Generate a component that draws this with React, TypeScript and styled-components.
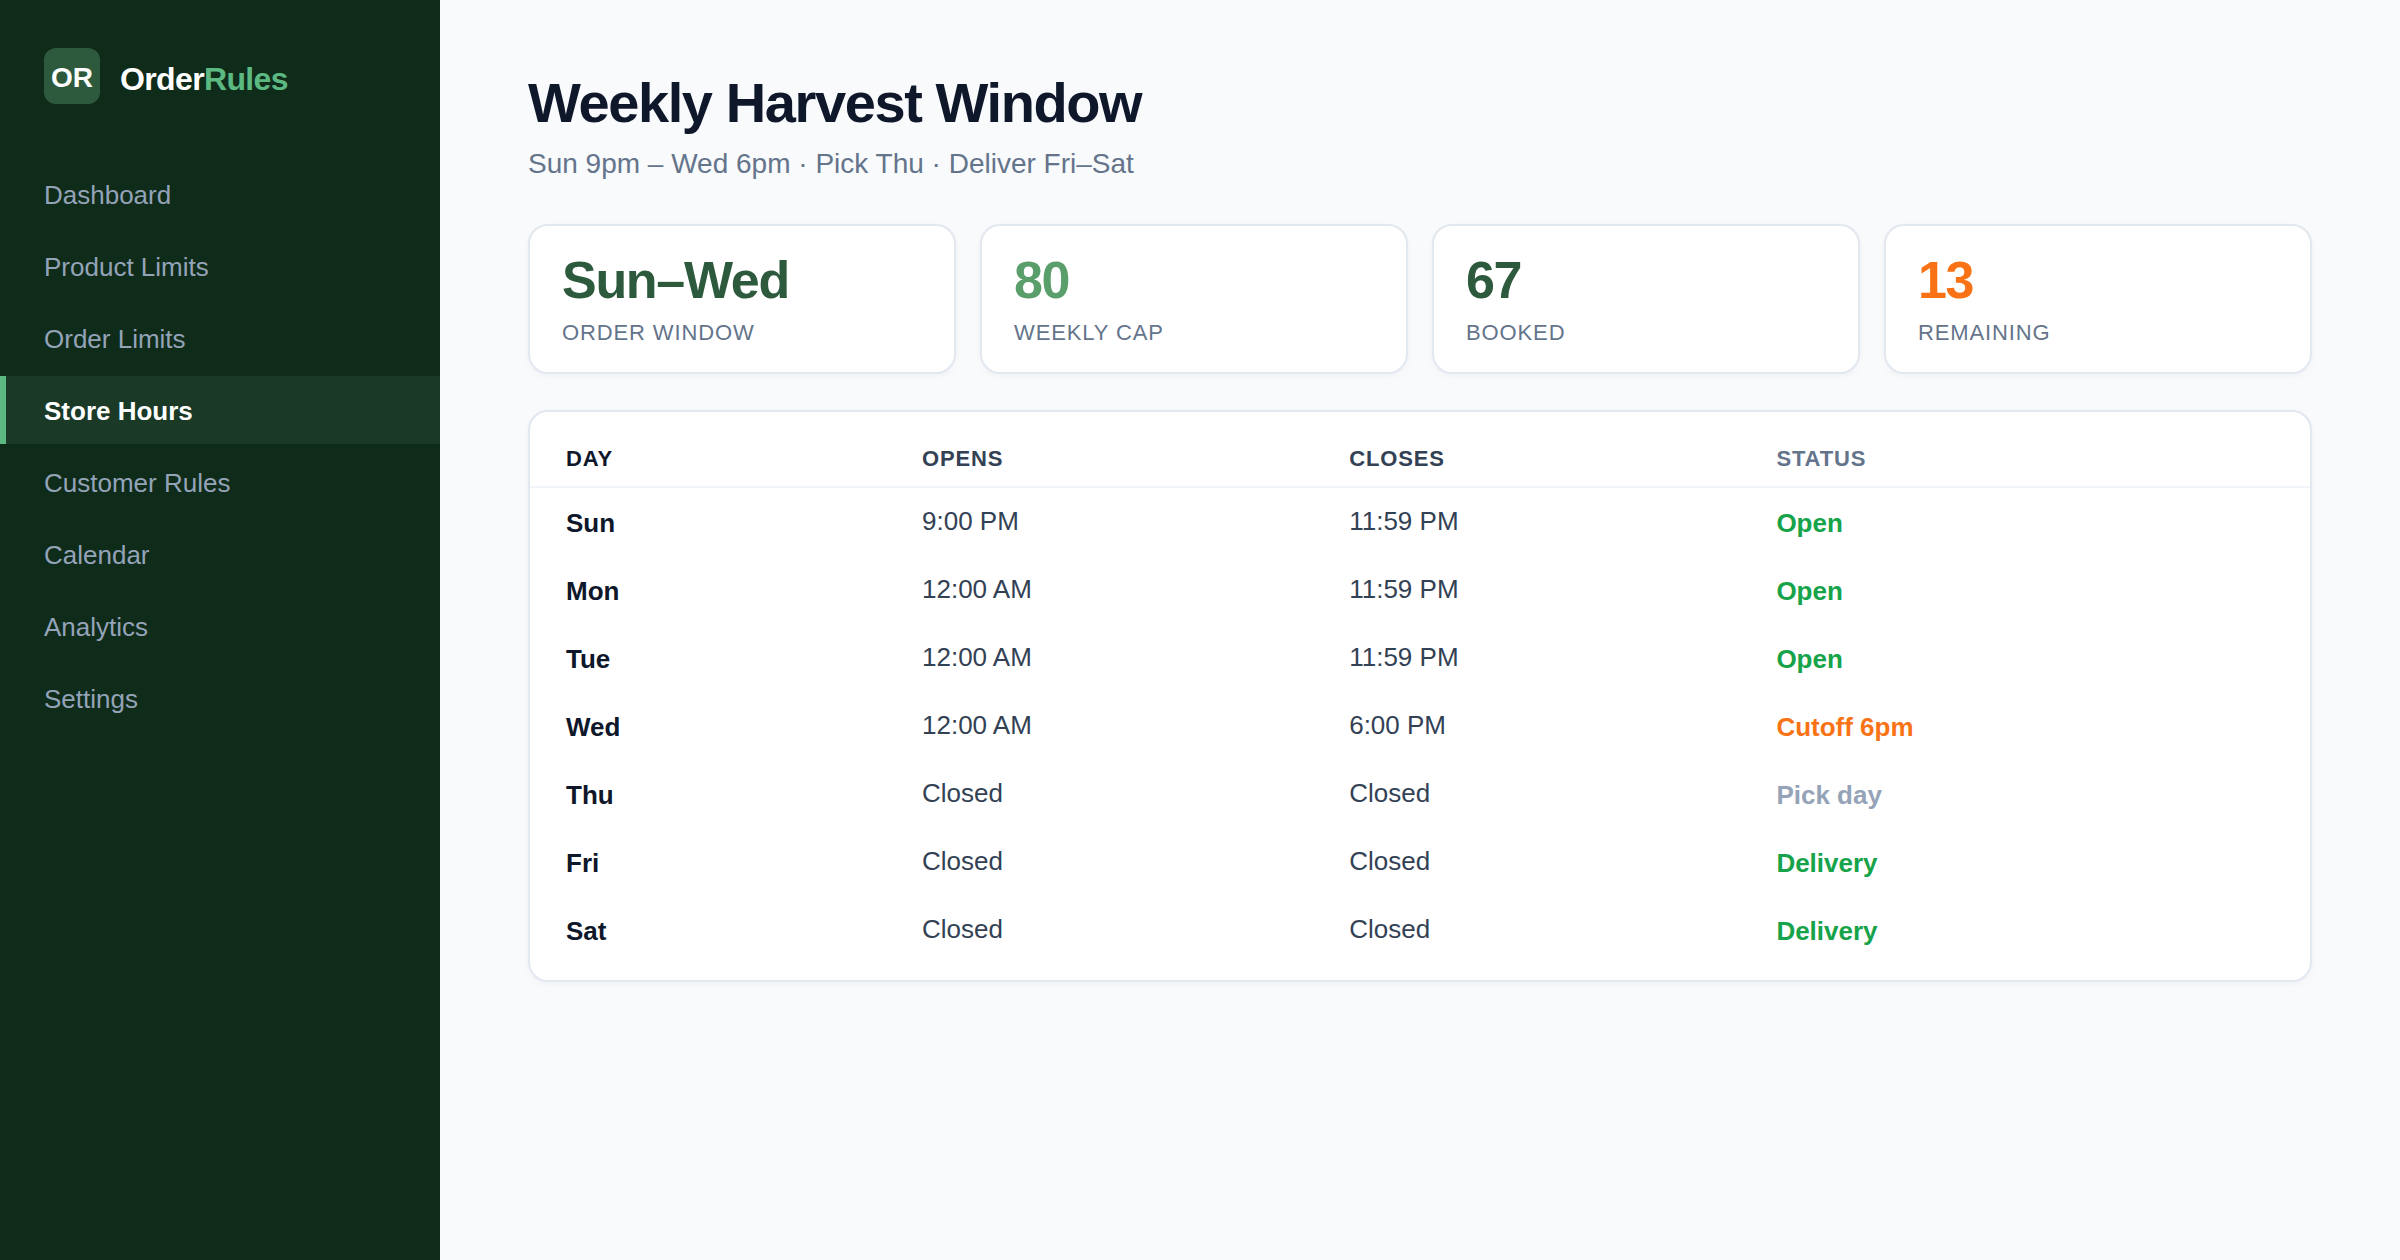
import React from "react";
import styled, { createGlobalStyle } from "styled-components";

const GlobalStyle = createGlobalStyle`
  *, *::before, *::after { box-sizing: border-box; }
  body {
    margin: 0;
    background: #f8fafc;
    color: #0f172a;
    font-family: "Liberation Sans", Arial, sans-serif;
  }
`;

const Page = styled.div`
  display: flex;
  min-height: 100vh;
`;

const Sidebar = styled.aside`
  flex: 0 0 440px;
  padding: 48px 0;
  background: #0f2b1a;
`;

const Brand = styled.div`
  display: flex;
  align-items: center;
  gap: 20px;
  padding: 0 44px;
  margin-bottom: 56px;
`;

const BrandMark = styled.div`
  display: flex;
  align-items: center;
  justify-content: center;
  width: 56px;
  height: 56px;
  padding-top: 4px;
  border-radius: 12px;
  background: #2d5a3d;
  color: #ffffff;
  font-size: 28px;
  font-weight: 700;
  line-height: 32px;
`;

const BrandName = styled.div`
  padding-top: 6px;
  color: #ffffff;
  font-size: 32px;
  font-weight: 700;
  line-height: 36px;
  letter-spacing: -0.02em;
`;

const BrandAccent = styled.span`
  color: #5bb981;
`;

const Nav = styled.nav`
  display: flex;
  flex-direction: column;
  gap: 4px;
`;

const NavLink = styled.a<{ $active: boolean }>`
  padding: 19px 38px 17px;
  border-left: 6px solid ${(p) => (p.$active ? "#5bb981" : "transparent")};
  background: ${(p) => (p.$active ? "#1a3a27" : "transparent")};
  color: ${(p) => (p.$active ? "#ffffff" : "#94a3b8")};
  font-size: 26px;
  font-weight: ${(p) => (p.$active ? 700 : 500)};
  line-height: 32px;
  text-decoration: none;
`;

const Main = styled.main`
  flex: 1;
  min-width: 0;
  padding: 72px 88px;
`;

const Title = styled.h1`
  margin: 0;
  font-size: 56px;
  font-weight: 700;
  line-height: 62px;
  letter-spacing: -0.025em;
`;

const Subtitle = styled.p`
  margin: 12px 0 42px;
  color: #64748b;
  font-size: 28px;
  font-weight: 500;
  line-height: 36px;
`;

const Stats = styled.section`
  display: grid;
  grid-template-columns: repeat(4, 1fr);
  gap: 24px;
  margin-bottom: 36px;
`;

const Card = styled.div`
  border: 2px solid #e2e8f0;
  border-radius: 20px;
  background: #ffffff;
  box-shadow: 0 2px 6px rgba(15, 23, 42, 0.04);
`;

const StatCard = styled(Card)`
  padding: 28px 32px 26px;
`;

const StatValue = styled.div<{ $color: string }>`
  color: ${(p) => p.$color};
  font-size: 52px;
  font-weight: 700;
  line-height: 52px;
  letter-spacing: -0.025em;
`;

const StatLabel = styled.div`
  margin-top: 14px;
  color: #64748b;
  font-size: 22px;
  font-weight: 500;
  line-height: 26px;
  letter-spacing: 0.04em;
  text-transform: uppercase;
`;

const TableCard = styled(Card)`
  padding: 16px 0;
`;

const Table = styled.table`
  width: 100%;
  border-collapse: separate;
  border-spacing: 0;
  table-layout: fixed;
`;

const HeadCell = styled.th<{ $color: string; $width: string }>`
  width: ${(p) => p.$width};
  padding: 18px 36px 14px;
  border-bottom: 2px solid #f1f5f9;
  color: ${(p) => p.$color};
  font-size: 22px;
  font-weight: 700;
  line-height: 26px;
  letter-spacing: 0.04em;
  text-align: left;
  text-transform: uppercase;
`;

const TimeCell = styled.td`
  padding: 17px 36px 19px;
  color: #334155;
  font-size: 26px;
  line-height: 32px;
`;

const DayCell = styled.th`
  padding: 19px 36px 17px;
  color: #0f172a;
  font-size: 26px;
  font-weight: 700;
  line-height: 32px;
  text-align: left;
`;

const StatusCell = styled.td<{ $color: string }>`
  padding: 19px 36px 17px;
  color: ${(p) => p.$color};
  font-size: 26px;
  font-weight: 700;
  line-height: 32px;
`;

const green = "#16a34a";
const orange = "#f97316";
const muted = "#94a3b8";

const navItems = [
  "Dashboard",
  "Product Limits",
  "Order Limits",
  "Store Hours",
  "Customer Rules",
  "Calendar",
  "Analytics",
  "Settings",
];

const stats = [
  { value: "Sun–Wed", label: "Order window", color: "#2d5a3d" },
  { value: "80", label: "Weekly cap", color: "#5a9e6b" },
  { value: "67", label: "Booked", color: "#2d5a3d" },
  { value: "13", label: "Remaining", color: orange },
];

const columns = [
  { label: "Day", color: "#0f172a", width: "20%" },
  { label: "Opens", color: "#334155", width: "24%" },
  { label: "Closes", color: "#334155", width: "24%" },
  { label: "Status", color: "#64748b", width: "32%" },
];

const hours = [
  { day: "Sun", opens: "9:00 PM", closes: "11:59 PM", status: "Open", color: green },
  { day: "Mon", opens: "12:00 AM", closes: "11:59 PM", status: "Open", color: green },
  { day: "Tue", opens: "12:00 AM", closes: "11:59 PM", status: "Open", color: green },
  { day: "Wed", opens: "12:00 AM", closes: "6:00 PM", status: "Cutoff 6pm", color: orange },
  { day: "Thu", opens: "Closed", closes: "Closed", status: "Pick day", color: muted },
  { day: "Fri", opens: "Closed", closes: "Closed", status: "Delivery", color: green },
  { day: "Sat", opens: "Closed", closes: "Closed", status: "Delivery", color: green },
];

export default function App() {
  return (
    <>
      <GlobalStyle />
      <Page>
        <Sidebar>
          <Brand>
            <BrandMark>OR</BrandMark>
            <BrandName>
              Order<BrandAccent>Rules</BrandAccent>
            </BrandName>
          </Brand>
          <Nav>
            {navItems.map((item) => {
              const active = item === "Store Hours";
              return (
                <NavLink
                  key={item}
                  href="#"
                  $active={active}
                  aria-current={active ? "page" : undefined}
                >
                  {item}
                </NavLink>
              );
            })}
          </Nav>
        </Sidebar>
        <Main>
          <Title>Weekly Harvest Window</Title>
          <Subtitle>Sun 9pm – Wed 6pm · Pick Thu · Deliver Fri–Sat</Subtitle>
          <Stats>
            {stats.map((s) => (
              <StatCard key={s.label}>
                <StatValue $color={s.color}>{s.value}</StatValue>
                <StatLabel>{s.label}</StatLabel>
              </StatCard>
            ))}
          </Stats>
          <TableCard>
            <Table>
              <thead>
                <tr>
                  {columns.map((c) => (
                    <HeadCell key={c.label} scope="col" $color={c.color} $width={c.width}>
                      {c.label}
                    </HeadCell>
                  ))}
                </tr>
              </thead>
              <tbody>
                {hours.map((h) => (
                  <tr key={h.day}>
                    <DayCell scope="row">{h.day}</DayCell>
                    <TimeCell>{h.opens}</TimeCell>
                    <TimeCell>{h.closes}</TimeCell>
                    <StatusCell $color={h.color}>{h.status}</StatusCell>
                  </tr>
                ))}
              </tbody>
            </Table>
          </TableCard>
        </Main>
      </Page>
    </>
  );
}
